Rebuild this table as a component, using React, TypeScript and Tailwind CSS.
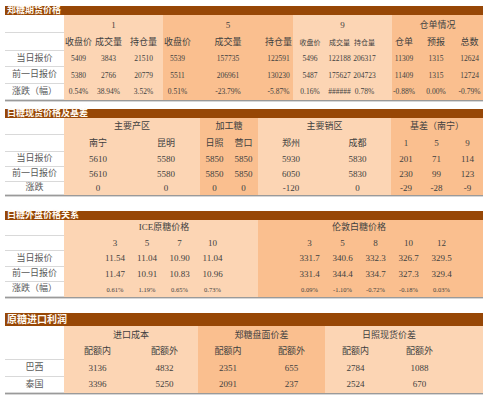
import React from "react";

type Cell = { w: string; bg: string; t?: string; cls?: string; size?: string };

const L = "bg-[#fcd5b4]";
const D = "bg-[#fabf8f]";

function Title({ text, big }: { text: string; big?: boolean }) {
  return (
    <div className={`flex items-center bg-[#974706] pl-[2px] font-bold text-[#fffaf2] ${big ? "h-[13px] text-[10px]" : "h-[9px] text-[9px] leading-[9px]"}`}>
      <span className="whitespace-nowrap">{text}</span>
    </div>
  );
}

function Row({ h, label, cells, size = "text-[7.5px]" }: { h: string; label?: string; cells: Cell[]; size?: string }) {
  return (
    <div className={`flex ${h}`}>
      <div className="flex w-[59px] shrink-0 items-center justify-center border-b border-[#d9d9d9] bg-white text-[9px] text-[#595959]">{label}</div>
      {cells.map((c, i) => (
        <div key={i} className={`flex shrink-0 items-center justify-center whitespace-nowrap ${c.w} ${c.bg} ${c.size ?? size} ${c.cls ?? ""}`}>
          {c.t}
        </div>
      ))}
    </div>
  );
}

function Shadow() {
  return (
    <div>
      <div className="h-px bg-[#9a9a9a]" />
      <div className="h-px bg-[#d6d6d6]" />
    </div>
  );
}

const fill = (cols: Cell[], vals: string[]): Cell[] => cols.map((c, i) => ({ ...c, t: vals[i] }));

// 郑糖期货
const cols1: Cell[] = [
  { w: "w-[29px]", bg: L }, { w: "w-[31px]", bg: L }, { w: "w-[39px]", bg: L },
  { w: "w-[29px]", bg: D }, { w: "w-[72px]", bg: D }, { w: "w-[29px]", bg: D },
  { w: "w-[34px]", bg: L }, { w: "w-[25px]", bg: L }, { w: "w-[40px]", bg: L, cls: "pr-[15px]" },
  { w: "w-[24px]", bg: D }, { w: "w-[40px]", bg: D }, { w: "w-[27px]", bg: D },
];

const head1 = fill(cols1, ["收盘价", "成交量", "持仓量", "收盘价", "成交量", "持仓量", "收盘价", "成交量", "持仓量", "仓单", "预报", "总数"]).map((c, i) => ({
  ...c,
  size: i >= 6 && i <= 8 ? "text-[7px]" : "text-[9px]",
  cls: `${c.cls ?? ""} pt-[2px]`,
}));

// 现货及基差
const cols2: Cell[] = [
  { w: "w-[68px]", bg: L }, { w: "w-[68px]", bg: L },
  { w: "w-[29px]", bg: D }, { w: "w-[29px]", bg: D },
  { w: "w-[66px]", bg: L }, { w: "w-[67px]", bg: L },
  { w: "w-[30px]", bg: D }, { w: "w-[31px]", bg: D }, { w: "w-[31px]", bg: D },
];

// 外盘
const cols3: Cell[] = [
  { w: "w-[35px]", bg: L }, { w: "w-[32px]", bg: L }, { w: "w-[32px]", bg: L }, { w: "w-[33px]", bg: L }, { w: "w-[33px]", bg: L }, { w: "w-[29px]", bg: L },
  { w: "w-[35px]", bg: D }, { w: "w-[33px]", bg: D }, { w: "w-[33px]", bg: D }, { w: "w-[33px]", bg: D }, { w: "w-[33px]", bg: D }, { w: "w-[33px]", bg: D }, { w: "w-[25px]", bg: D },
];

// 进口利润
const cols4: Cell[] = [
  { w: "w-[67px]", bg: L }, { w: "w-[67px]", bg: L },
  { w: "w-[60px]", bg: D }, { w: "w-[67px]", bg: D },
  { w: "w-[61px]", bg: L }, { w: "w-[67px]", bg: L }, { w: "w-[30px]", bg: L },
];

export default function App() {
  return (
    <div className="h-[400px] w-[492px] overflow-hidden bg-white pl-[5px] pt-[6px] font-['Liberation_Serif','Noto_Sans_CJK_SC',serif] text-[#3f3f3f]">
      <div className="w-[478px]">
        <Title text="郑糖期货价格" />
        <Row h="h-[18px]" size="text-[9px] pt-[3px]" cells={[
          { w: "w-[99px]", bg: L, t: "1" }, { w: "w-[130px]", bg: D, t: "5" },
          { w: "w-[99px]", bg: L, t: "9" }, { w: "w-[91px]", bg: D, t: "仓单情况" },
        ]} />
        <Row h="h-[18px]" cells={head1} />
        <Row h="h-[16px]" label="当日报价" cells={fill(cols1, ["5409", "3843", "21510", "5539", "157735", "122591", "5496", "122188", "206317", "11309", "1315", "12624"])} />
        <Row h="h-[17px]" label="前一日报价" cells={fill(cols1, ["5380", "2766", "20779", "5511", "206961", "130230", "5487", "175627", "204723", "11409", "1315", "12724"])} />
        <Row h="h-[16px]" label="涨跌（幅）" cells={fill(cols1, ["0.54%", "38.94%", "3.52%", "0.51%", "-23.79%", "-5.87%", "0.16%", "######", "0.78%", "-0.88%", "0.00%", "-0.79%"])} />
        <Shadow />
      </div>

      <div className="mt-[7px] w-[478px]">
        <Title text="白糖现货价格及基差" />
        <Row h="h-[17px]" size="text-[9px]" cells={[
          { w: "w-[136px]", bg: L, t: "主要产区" }, { w: "w-[58px]", bg: D, t: "加工糖" },
          { w: "w-[133px]", bg: L, t: "主要销区" }, { w: "w-[92px]", bg: D, t: "基差（南宁）" },
        ]} />
        <Row h="h-[17px]" size="text-[9px]" cells={fill(cols2, ["南宁", "昆明", "日照", "营口", "郑州", "成都", "1", "5", "9"])} />
        <Row h="h-[15px]" size="text-[9px]" label="当日报价" cells={fill(cols2, ["5610", "5580", "5850", "5850", "5930", "5830", "201", "71", "114"])} />
        <Row h="h-[15px]" size="text-[9px]" label="前一日报价" cells={fill(cols2, ["5610", "5580", "5850", "5850", "6050", "5830", "230", "99", "123"])} />
        <Row h="h-[13px]" size="text-[9px]" label="涨跌" cells={fill(cols2, ["0", "0", "0", "0", "-120", "0", "-29", "-28", "-9"])} />
        <Shadow />
      </div>

      <div className="mt-[14px] w-[478px]">
        <Title text="白糖外盘价格关系" />
        <Row h="h-[16px]" size="text-[9px]" cells={[
          { w: "w-[35px]", bg: L }, { w: "w-[130px]", bg: L, t: "ICE原糖价格" }, { w: "w-[29px]", bg: L },
          { w: "w-[35px]", bg: D }, { w: "w-[132px]", bg: D, t: "伦敦白糖价格" }, { w: "w-[58px]", bg: D },
        ]} />
        <Row h="h-[15px]" size="text-[9px]" cells={fill(cols3, ["", "3", "5", "7", "10", "", "", "3", "5", "8", "10", "12", ""])} />
        <Row h="h-[16px]" size="text-[9px]" label="当日报价" cells={fill(cols3, ["", "11.54", "11.04", "10.90", "11.04", "", "", "331.7", "340.6", "332.3", "326.7", "329.5", ""])} />
        <Row h="h-[15px]" size="text-[9px]" label="前一日报价" cells={fill(cols3, ["", "11.47", "10.91", "10.83", "10.96", "", "", "331.4", "344.4", "334.7", "327.3", "329.4", ""])} />
        <Row h="h-[15px]" size="text-[6.5px]" label="涨跌（幅）" cells={fill(cols3, ["", "0.61%", "1.19%", "0.65%", "0.73%", "", "", "0.09%", "-1.10%", "-0.72%", "-0.18%", "0.03%", ""])} />
        <Shadow />
      </div>

      <div className="mt-[14px] w-[478px]">
        <Title text="原糖进口利润" big />
        <div className="flex">
          <div className="h-[34px] w-[59px] shrink-0 border-b border-[#d9d9d9] bg-white" />
          <div className="flex flex-col">
            <div className="flex h-[17px] text-[9px]">
              <div className={`flex w-[134px] items-center justify-center pt-[2px] ${L}`}>进口成本</div>
              <div className={`flex w-[127px] items-center justify-center pt-[2px] ${D}`}>郑糖盘面价差</div>
              <div className={`flex w-[128px] items-center justify-center pt-[2px] ${L}`}>日照现货价差</div>
              <div className={`w-[30px] ${L}`} />
            </div>
            <div className="flex h-[17px]">
              {fill(cols4, ["配额内", "配额外", "配额内", "配额外", "配额内", "配额外", ""]).map((c, i) => (
                <div key={i} className={`flex shrink-0 items-center justify-center text-[9px] ${c.w} ${c.bg}`}>{c.t}</div>
              ))}
            </div>
          </div>
        </div>
        <Row h="h-[17px]" size="text-[9px]" label="巴西" cells={fill(cols4, ["3136", "4832", "2351", "655", "2784", "1088", ""])} />
        <Row h="h-[16px]" size="text-[9px]" label="泰国" cells={fill(cols4, ["3396", "5250", "2091", "237", "2524", "670", ""])} />
        <Shadow />
      </div>
    </div>
  );
}
